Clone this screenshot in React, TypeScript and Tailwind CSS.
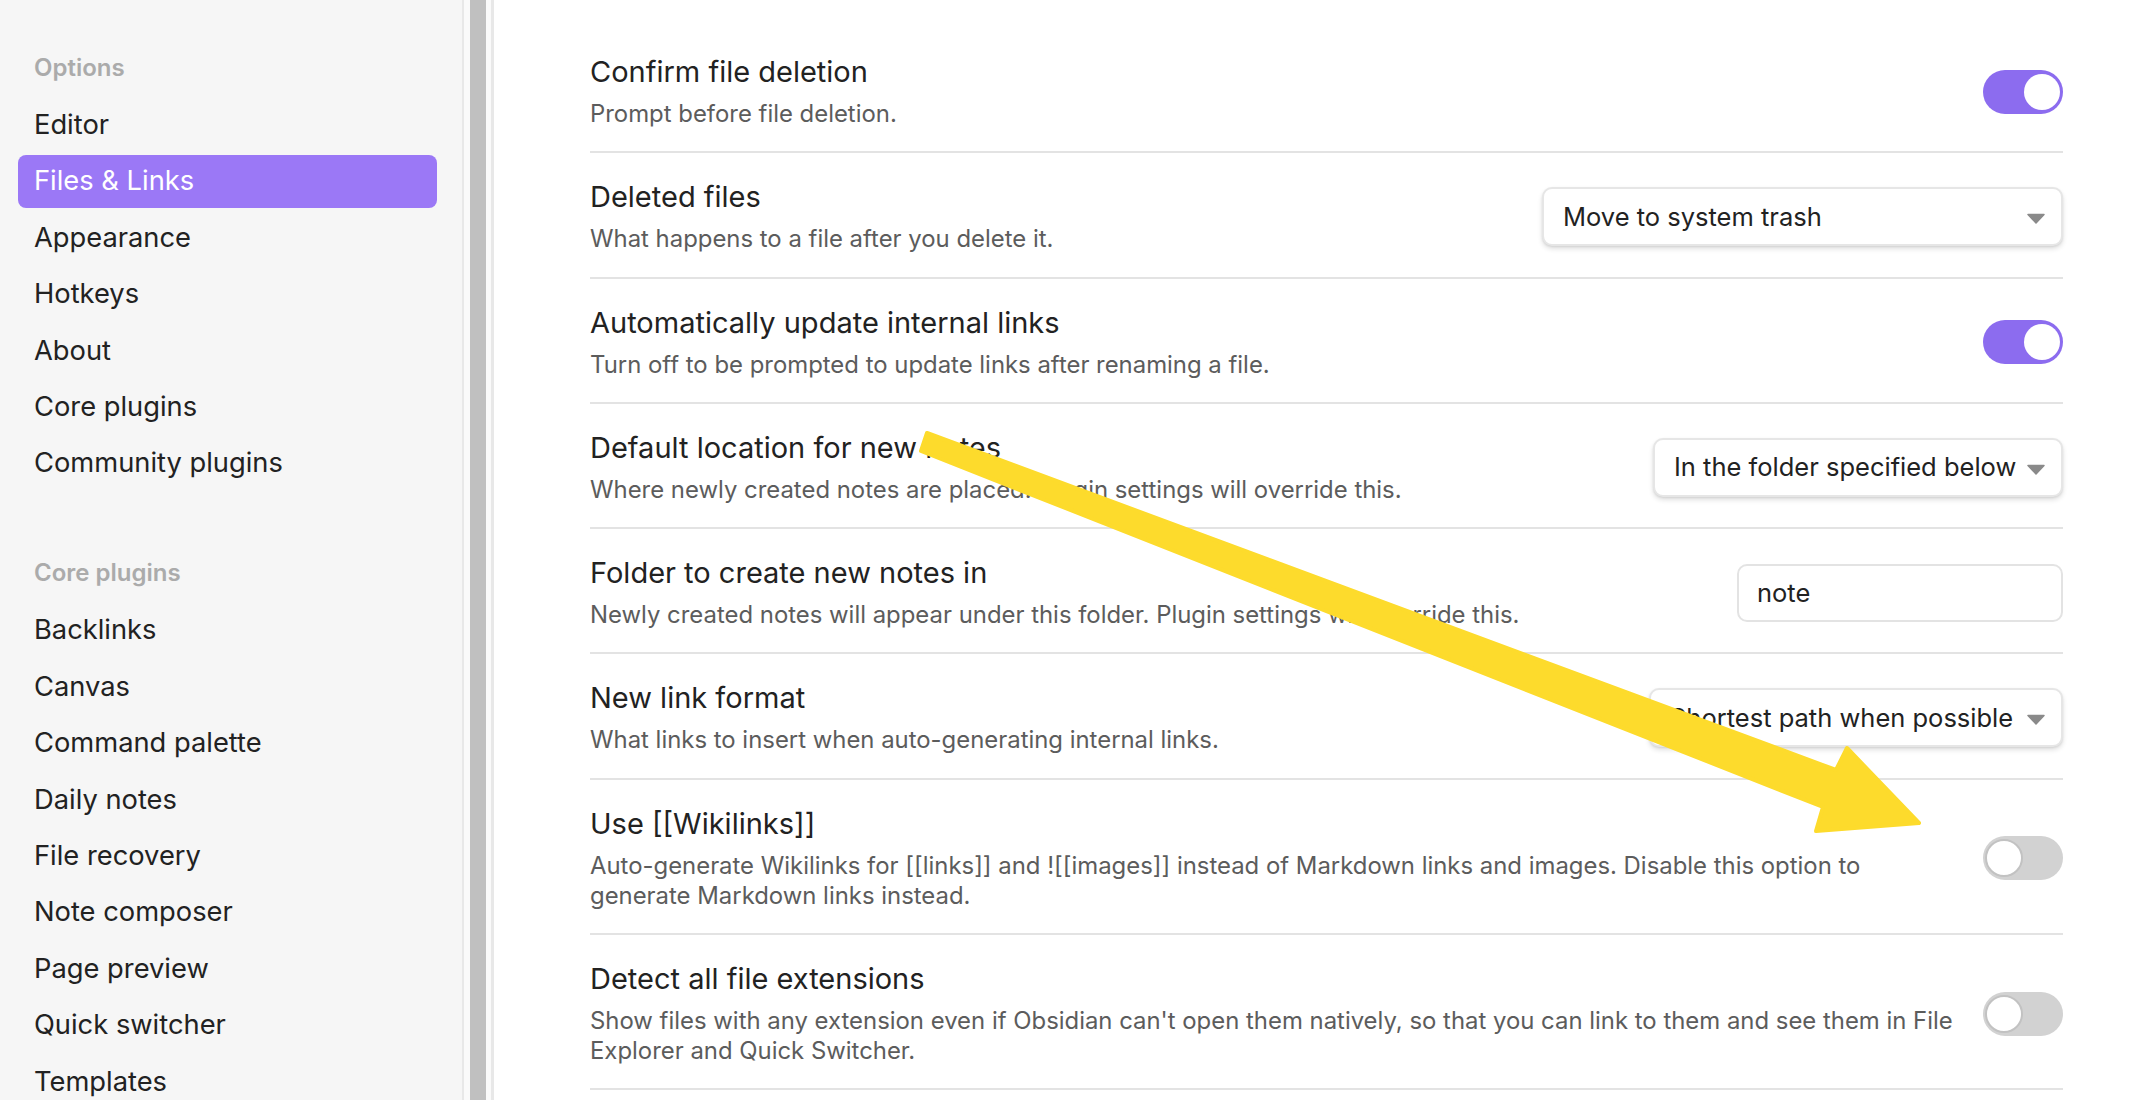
import React from "react";

const optionItems = [
  "Editor",
  "Files & Links",
  "Appearance",
  "Hotkeys",
  "About",
  "Core plugins",
  "Community plugins",
];

const coreItems = [
  "Backlinks",
  "Canvas",
  "Command palette",
  "Daily notes",
  "File recovery",
  "Note composer",
  "Page preview",
  "Quick switcher",
  "Templates",
];

type Control =
  | { kind: "toggle"; on: boolean }
  | { kind: "dropdown"; value: string; width: string }
  | { kind: "input"; value: string; width: string };

type Setting = {
  name: string;
  desc: string[];
  control: Control;
};

const settings: Setting[] = [
  {
    name: "Confirm file deletion",
    desc: ["Prompt before file deletion."],
    control: { kind: "toggle", on: true },
  },
  {
    name: "Deleted files",
    desc: ["What happens to a file after you delete it."],
    control: { kind: "dropdown", value: "Move to system trash", width: "w-[521px]" },
  },
  {
    name: "Automatically update internal links",
    desc: ["Turn off to be prompted to update links after renaming a file."],
    control: { kind: "toggle", on: true },
  },
  {
    name: "Default location for new notes",
    desc: ["Where newly created notes are placed. Plugin settings will override this."],
    control: { kind: "dropdown", value: "In the folder specified below", width: "w-[410px]" },
  },
  {
    name: "Folder to create new notes in",
    desc: ["Newly created notes will appear under this folder. Plugin settings will override this."],
    control: { kind: "input", value: "note", width: "w-[326px]" },
  },
  {
    name: "New link format",
    desc: ["What links to insert when auto-generating internal links."],
    control: { kind: "dropdown", value: "Shortest path when possible", width: "w-[414px]" },
  },
  {
    name: "Use [[Wikilinks]]",
    desc: [
      "Auto-generate Wikilinks for [[links]] and ![[images]] instead of Markdown links and images. Disable this option to",
      "generate Markdown links instead.",
    ],
    control: { kind: "toggle", on: false },
  },
  {
    name: "Detect all file extensions",
    desc: [
      "Show files with any extension even if Obsidian can't open them natively, so that you can link to them and see them in File",
      "Explorer and Quick Switcher.",
    ],
    control: { kind: "toggle", on: false },
  },
];

function Toggle({ on }: { on: boolean }) {
  if (on) {
    return (
      <div className="relative w-[80px] h-[44px] rounded-full bg-[#8c6cef]">
        <div className="absolute right-[3px] top-[4px] w-[36px] h-[36px] rounded-full bg-white" />
      </div>
    );
  }
  return (
    <div className="relative w-[80px] h-[44px] rounded-full bg-[#d2d2d2]">
      <div className="absolute left-[2px] top-[3px] w-[38px] h-[38px] rounded-full bg-white border-[2px] border-[#c2c2c2]" />
    </div>
  );
}

function Dropdown({ value, width }: { value: string; width: string }) {
  return (
    <div
      className={`relative ${width} h-[59px] flex items-center pl-[19px] rounded-[10px] bg-white border-2 border-[#e6e6e6] shadow-[0_3px_5px_rgba(0,0,0,0.12),0_1px_2px_rgba(0,0,0,0.08)] text-[25.5px] text-[#222222]`}
    >
      {value}
      {/* chevron */}
      <svg className="absolute right-[16px] top-[24px]" width="18" height="11" viewBox="0 0 18 11">
        <path d="M1 1.5 L17 1.5 L9 10 Z" fill="#8a8a8a" stroke="#8a8a8a" strokeWidth="1.5" strokeLinejoin="round" />
      </svg>
    </div>
  );
}

function SettingRow({ s }: { s: Setting }) {
  const c = s.control;
  return (
    <div className="flex items-center border-b-2 border-[#e3e3e3] pt-[26px] pb-[22.3px]">
      <div className="flex-1 mr-[12px]">
        <div className="text-[29px] leading-[36px] text-[#222222]">{s.name}</div>
        <div className="mt-[9px] text-[23.9px] leading-[30px] text-[#5c5c5c]">
          {s.desc.map((line, i) => (
            <div key={i}>{line}</div>
          ))}
        </div>
      </div>
      <div className="shrink-0 flex justify-end">
        {c.kind === "toggle" && <Toggle on={c.on} />}
        {c.kind === "dropdown" && <Dropdown value={c.value} width={c.width} />}
        {c.kind === "input" && (
          <div
            className={`${c.width} h-[58px] flex items-center pl-[18px] rounded-[10px] bg-white border-2 border-[#e3e3e3] text-[25.5px] text-[#222222]`}
          >
            {c.value}
          </div>
        )}
      </div>
    </div>
  );
}

function NavItem({ label, active }: { label: string; active?: boolean }) {
  return (
    <div
      className={`h-[53px] flex items-center px-[16px] rounded-[8px] text-[27.3px] ${
        active ? "bg-[#9b78f6] text-white" : "text-[#222222]"
      }`}
    >
      {label}
    </div>
  );
}

export default function App() {
  return (
    <div className="relative w-[2134px] h-[1100px] overflow-hidden flex bg-white font-['Inter','Noto_Sans',sans-serif]">
      {/* Sidebar */}
      <aside className="w-[462px] shrink-0 bg-[#f6f6f6] pl-[18px] pr-[25px] pt-[50px]">
        <div className="h-[36px] flex items-center px-[16px] text-[24px] font-semibold text-[#ababab]">Options</div>
        <div className="mt-[13px] flex flex-col gap-[3.4px]">
          {optionItems.map((item) => (
            <NavItem key={item} label={item} active={item === "Files & Links"} />
          ))}
        </div>
        <div className="mt-[65px] h-[36px] flex items-center px-[16px] text-[24px] font-semibold text-[#ababab]">
          Core plugins
        </div>
        <div className="mt-[13px] flex flex-col gap-[3.4px]">
          {coreItems.map((item) => (
            <NavItem key={item} label={item} />
          ))}
        </div>
      </aside>

      {/* Sidebar scrollbar */}
      <div className="w-[32px] shrink-0 flex bg-[#fafafa] border-l-2 border-r-[3px] border-[#e8e8e8]">
        <div className="ml-[6px] w-[16px] h-full bg-[#c0c0c0]" />
      </div>

      {/* Settings content */}
      <main className="flex-1 pl-[96px] pr-[71px] pt-[28px]">
        {settings.map((s) => (
          <SettingRow key={s.name} s={s} />
        ))}
      </main>

      {/* Annotation arrow */}
      <svg
        className="absolute left-0 top-0 pointer-events-none"
        width="2134"
        height="1100"
        viewBox="0 0 2134 1100"
      >
        <polygon
          points="927,433 1836,770 1847,748 1919,823 1816,831 1823,807 921,451"
          fill="#fddb2c"
          stroke="#fddb2c"
          strokeWidth="4"
          strokeLinejoin="round"
        />
      </svg>
    </div>
  );
}
